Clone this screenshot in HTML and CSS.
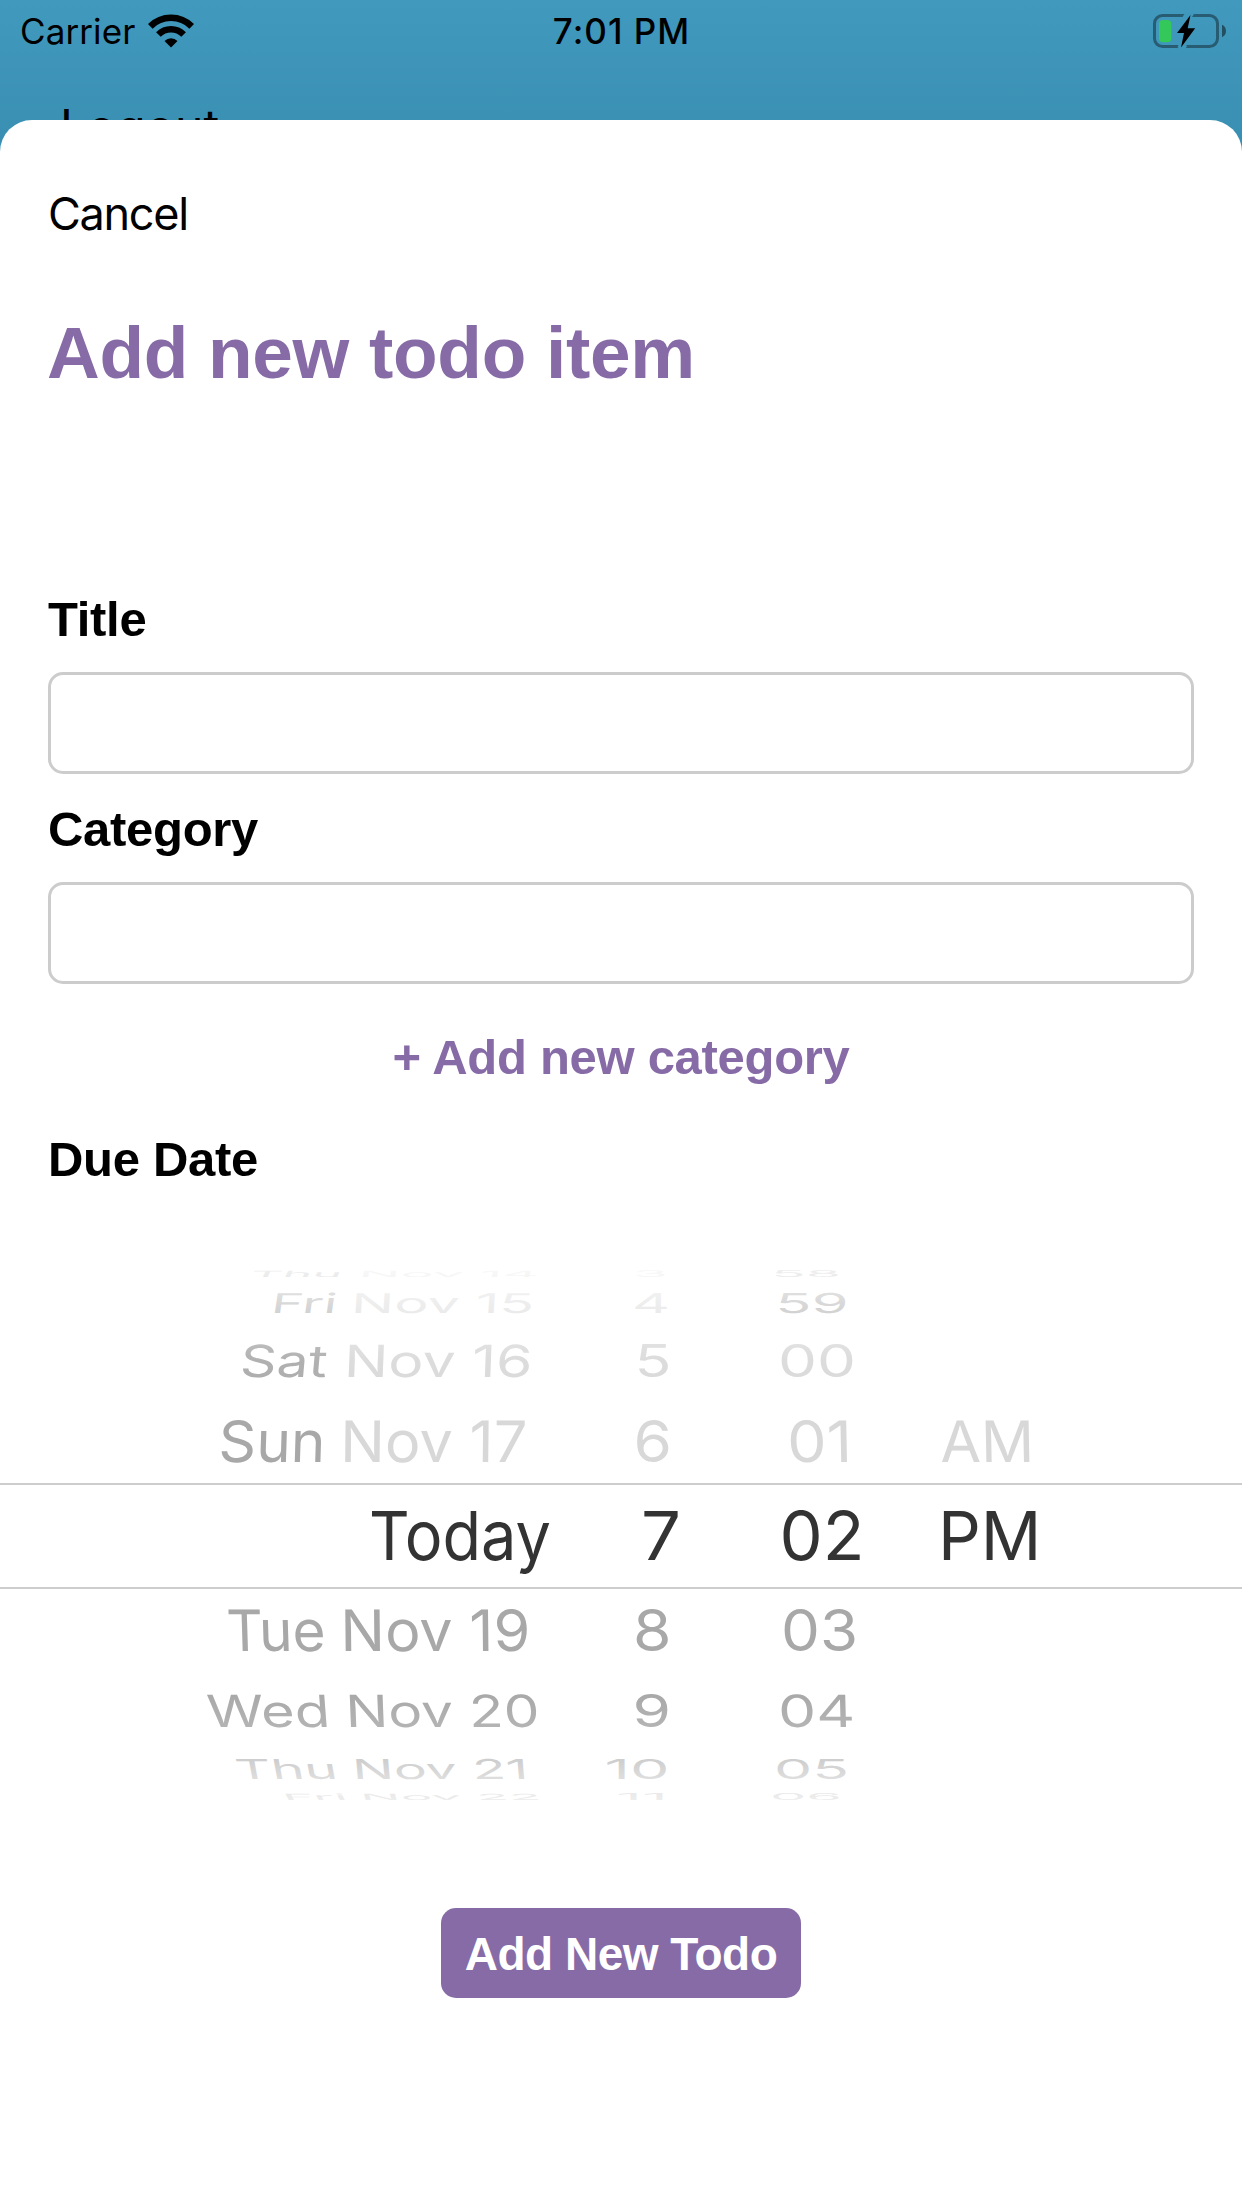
FILE: index.html
```html
<!DOCTYPE html>
<html lang="en">
<head>
<meta charset="utf-8">
<title>Add new todo item</title>
<link rel="stylesheet" href="styles.css">
</head>
<body>
<div class="screen">
  <header class="status">
    <div class="status-left">
      <span class="carrier">Carrier</span>
      <svg class="wifi" width="46" height="34" viewBox="149 12.5 46 34">
        <g fill="none" stroke="#000">
          <path stroke-width="6.5" d="M151.3 24.9A29.2 29.2 0 0 1 192.7 24.9"/>
          <path stroke-width="6.6" d="M159.4 33A17.9 17.9 0 0 1 184.6 33"/>
        </g>
        <path d="M172 46L165.5 39.4A9.5 9.5 0 0 1 178.5 39.4Z"/>
      </svg>
    </div>
    <span class="time">7:01 PM</span>
    <div class="status-right">
      <svg width="74" height="36" viewBox="1153 12 74 36">
        <rect x="1154.5" y="14.5" width="63" height="31" rx="8" fill="none" stroke="#285c72" stroke-width="3"/>
        <path d="M1190.500 11L1186 18M1181 48L1183.500 43" stroke="#3f97bb" stroke-width="8"/>
        <rect x="1159" y="19" width="12.300" height="22.300" rx="4" fill="#34c759"/>
        <path d="M1190.500 14L1177 32H1184L1181 46.500L1195.200 27.300H1187.700Z"/>
        <path d="M1222 23.800C1227.300 26 1227.300 34 1222 36.200Z" fill="#234f62"/>
      </svg>
    </div>
  </header>
  <div class="behind">Logout</div>

  <main class="sheet">
    <a class="cancel">Cancel</a>
    <h1>Add new todo item</h1>
    <label class="label" for="title">Title</label>
    <input class="field" id="title" type="text">
    <label class="label label-next" for="category">Category</label>
    <input class="field" id="category" type="text">
    <a class="add-category">+ Add new category</a>
    <span class="label label-date">Due Date</span>

    <svg class="picker" viewBox="0 1260 1242 560" width="1242" height="560">
      <defs>
        <linearGradient id="fade" x1="0" y1="1260" x2="0" y2="1820" gradientUnits="userSpaceOnUse">
          <stop offset="0" stop-color="#fff" stop-opacity=".9"/>
          <stop offset=".18" stop-color="#fff" stop-opacity=".1"/>
          <stop offset=".3" stop-color="#fff" stop-opacity="0"/>
          <stop offset=".77" stop-color="#fff" stop-opacity="0"/>
          <stop offset=".84" stop-color="#fff" stop-opacity=".15"/>
          <stop offset=".95" stop-color="#fff" stop-opacity=".75"/>
          <stop offset="1" stop-color="#fff" stop-opacity=".9"/>
        </linearGradient>
      </defs>
      <g class="wheel">
        <g class="mid">
          <text transform="matrix(1 0 -.07 .15 249 1277)" textLength="92" lengthAdjust="spacingAndGlyphs">Thu</text>
          <text transform="matrix(1 0 -.07 .48 270 1312.700)" textLength="66" lengthAdjust="spacingAndGlyphs">Fri</text>
          <text transform="matrix(1 0 -.07 .78 239 1377)" textLength="87" lengthAdjust="spacingAndGlyphs">Sat</text>
          <text transform="matrix(1 0 -.03 1 218 1462)" textLength="107" lengthAdjust="spacingAndGlyphs">Sun</text>
          <text transform="matrix(1 0 0 .15 771 1277)" textLength="70" lengthAdjust="spacingAndGlyphs">58</text>
          <text transform="matrix(1 0 -.02 .48 775 1312.700)" textLength="73" lengthAdjust="spacingAndGlyphs">59</text>
        </g>
        <g class="past">
          <text transform="matrix(1 0 -.03 .15 358 1277)" textLength="180" lengthAdjust="spacingAndGlyphs">Nov 14</text>
          <text transform="matrix(1 0 -.03 .48 350.500 1312.700)" textLength="183" lengthAdjust="spacingAndGlyphs">Nov 15</text>
          <text transform="matrix(1 0 -.03 .78 343.500 1377)" textLength="188.500" lengthAdjust="spacingAndGlyphs">Nov 16</text>
          <text transform="matrix(1 0 -.01 1 340 1462)" textLength="187" lengthAdjust="spacingAndGlyphs">Nov 17</text>
          <text transform="matrix(1 0 0 .15 633 1277)" textLength="35" lengthAdjust="spacingAndGlyphs">3</text>
          <text transform="matrix(1 0 0 .48 632 1312.700)" textLength="38" lengthAdjust="spacingAndGlyphs">4</text>
          <text transform="matrix(1 0 0 .78 634.500 1377)" textLength="37" lengthAdjust="spacingAndGlyphs">5</text>
          <text transform="matrix(1 0 0 1 633.500 1462)" textLength="38.500" lengthAdjust="spacingAndGlyphs">6</text>
          <text transform="matrix(1 0 0 .78 778 1377)" textLength="78" lengthAdjust="spacingAndGlyphs">00</text>
          <text transform="matrix(1 0 .02 1 787.500 1462)" textLength="65" lengthAdjust="spacingAndGlyphs">01</text>
          <text transform="matrix(1 0 .02 1 940.500 1462)" textLength="94" lengthAdjust="spacingAndGlyphs">AM</text>
        </g>
        <g class="mid">
          <text transform="matrix(1 0 .03 1 227 1650.700)" textLength="99" lengthAdjust="spacingAndGlyphs">Tue</text>
          <text transform="matrix(1 0 .01 1 340.500 1650.700)" textLength="190" lengthAdjust="spacingAndGlyphs">Nov 19</text>
          <text transform="matrix(1 0 0 1 633 1650.700)" textLength="38.500" lengthAdjust="spacingAndGlyphs">8</text>
          <text transform="matrix(1 0 0 1 781 1650.700)" textLength="77" lengthAdjust="spacingAndGlyphs">03</text>
          <text transform="matrix(1 0 .06 .78 208 1727)" textLength="123" lengthAdjust="spacingAndGlyphs">Wed</text>
          <text transform="matrix(1 0 .03 .78 346 1727)" textLength="194" lengthAdjust="spacingAndGlyphs">Nov 20</text>
          <text transform="matrix(1 0 0 .78 632.500 1727)" textLength="38.500" lengthAdjust="spacingAndGlyphs">9</text>
          <text transform="matrix(1 0 .02 .78 778.500 1727)" textLength="77" lengthAdjust="spacingAndGlyphs">04</text>
          <text transform="matrix(1 0 .09 .48 237 1778.700)" textLength="102" lengthAdjust="spacingAndGlyphs">Thu</text>
          <text transform="matrix(1 0 .04 .48 353 1778.700)" textLength="176" lengthAdjust="spacingAndGlyphs">Nov 21</text>
          <text transform="matrix(1 0 0 .48 604.500 1778.700)" textLength="65" lengthAdjust="spacingAndGlyphs">10</text>
          <text transform="matrix(1 0 0 .48 774 1778.700)" textLength="75" lengthAdjust="spacingAndGlyphs">05</text>
          <text transform="matrix(1 0 .08 .15 284 1800)" textLength="65" lengthAdjust="spacingAndGlyphs">Fri</text>
          <text transform="matrix(1 0 .04 .15 361 1800)" textLength="181" lengthAdjust="spacingAndGlyphs">Nov 22</text>
          <text transform="matrix(1 0 0 .15 616 1800)" textLength="52" lengthAdjust="spacingAndGlyphs">11</text>
          <text transform="matrix(1 0 0 .15 770 1800)" textLength="72" lengthAdjust="spacingAndGlyphs">06</text>
        </g>
      </g>
      <rect x="0" y="1260" width="1242" height="560" fill="url(#fade)"/>
      <path d="M0 1484H1242M0 1588H1242" stroke="#cdcdcd" stroke-width="2"/>
      <g class="selected">
        <text x="369" y="1560" textLength="182" lengthAdjust="spacingAndGlyphs">Today</text>
        <text x="641" y="1560" textLength="40" lengthAdjust="spacingAndGlyphs">7</text>
        <text x="779.500" y="1560" textLength="85" lengthAdjust="spacingAndGlyphs">02</text>
        <text x="938" y="1560" textLength="103.500" lengthAdjust="spacingAndGlyphs">PM</text>
      </g>
    </svg>

    <button class="submit" type="button">Add New Todo</button>
  </main>
</div>
</body>
</html>
```
FILE: styles.css
```css
* {
  box-sizing: border-box;
}

body {
  margin: 0;
  background: #fff;
  color: #000;
  font-family: "Liberation Sans", Arial, sans-serif;
}

.screen {
  display: flex;
  flex-direction: column;
  width: 1242px;
  height: 2208px;
  overflow: hidden;
  background: linear-gradient(#4199be 0, #3a91b4 120px, #398eb2 160px);
}

.status {
  display: grid;
  grid-template-columns: 1fr auto 1fr;
  align-items: center;
  height: 60px;
  padding: 0 15px 0 20px;
  font-family: Inter, "Noto Sans", sans-serif;
  font-size: 35px;
  line-height: 62px;
}

.status-left {
  display: flex;
  align-items: center;
  gap: 13px;
}

.carrier {
  letter-spacing: 0.1px;
}

.time {
  margin-right: 4px;
  font-weight: 550;
  letter-spacing: 1px;
}

.status-right {
  display: flex;
  justify-content: flex-end;
}

.behind {
  height: 60px;
  padding-left: 60px;
  font-family: Inter, "Noto Sans", sans-serif;
  font-size: 48px;
  line-height: 134px;
  letter-spacing: 0.2px;
}

.sheet {
  display: flex;
  flex: 1;
  flex-direction: column;
  align-items: flex-start;
  padding: 63px 48px 0;
  border-radius: 32px 32px 0 0;
  background: #fff;
  position: relative;
}

.cancel {
  font-family: Inter, "Noto Sans", sans-serif;
  font-size: 45px;
  line-height: 61px;
  letter-spacing: -1.3px;
}

h1 {
  margin: 67px 0 196px -1px;
  color: #866ba6;
  font-size: 73px;
  line-height: 84px;
  letter-spacing: -0.3px;
}

.label {
  font-size: 49px;
  font-weight: bold;
  line-height: 56px;
  letter-spacing: -0.3px;
}

.label-next {
  margin-top: 27px;
}

.label-date {
  margin-top: 46px;
}

.field {
  width: 100%;
  height: 102px;
  margin: 25px 0 0;
  border: 3px solid #ccc;
  border-radius: 15px;
  background: #fff;
}

.add-category {
  align-self: center;
  margin-top: 45px;
  color: #866ba6;
  font-size: 49px;
  font-weight: bold;
  line-height: 56px;
  letter-spacing: -0.3px;
}

.picker {
  flex: none;
  margin: 73px -48px 0;
  font-family: Inter, "Noto Sans", sans-serif;
}

.wheel {
  font-size: 57px;
}

.mid {
  fill: #a8a8a8;
}

.past {
  fill: #d8d8d8;
}

.selected {
  fill: #333;
  font-size: 68px;
}

.submit {
  align-self: center;
  width: 360px;
  height: 90px;
  margin-top: 88px;
  padding: 2px 0 0;
  border: 0;
  border-radius: 15px;
  background: #866ba6;
  color: #fff;
  font: bold 46px/88px "Liberation Sans", Arial, sans-serif;
  letter-spacing: -0.5px;
}
```
